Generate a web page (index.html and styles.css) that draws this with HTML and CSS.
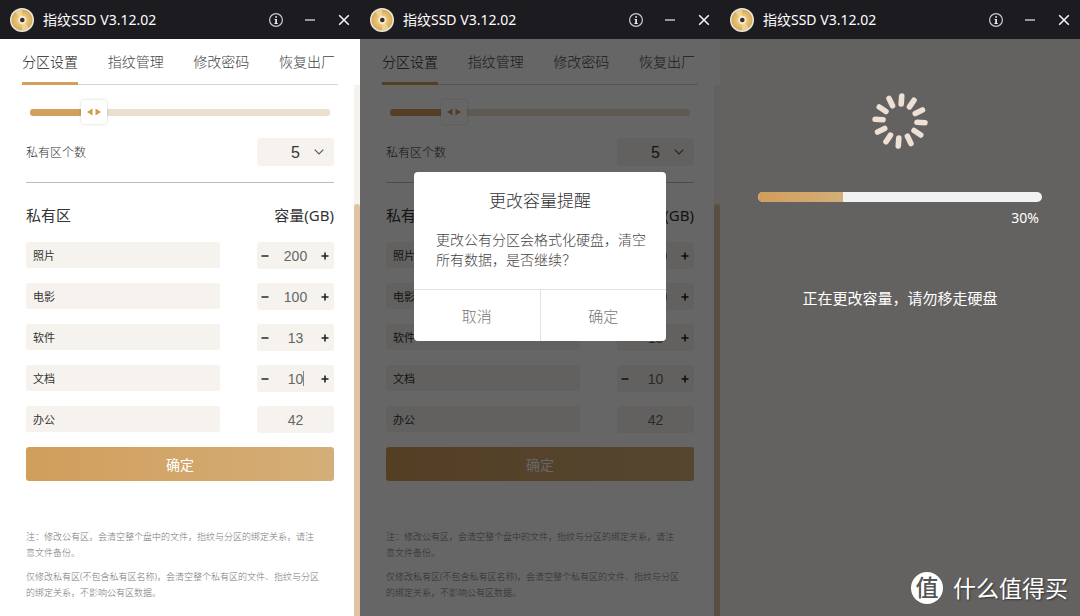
FILE: index.html
```html
<!DOCTYPE html>
<html lang="zh-CN">
<head>
<meta charset="utf-8">
<meta name="viewport" content="width=device-width, initial-scale=1">
<title>指纹SSD V3.12.02</title>
<link rel="stylesheet" href="styles.css">
</head>
<body>
<svg class="defs" aria-hidden="true">
  <defs>
    <radialGradient id="gold" cx=".5" cy=".5" r=".55"><stop offset="0" stop-color="#f6dc9c"/><stop offset=".6" stop-color="#e3bb6c"/><stop offset="1" stop-color="#d0a559"/></radialGradient>
    <symbol id="disc" viewBox="0 0 24 24"><circle cx="12" cy="12" r="12" fill="#efe9df"/><circle cx="12" cy="12" r="10.6" fill="url(#gold)"/><path d="M12 12 5 3.9A10.6 10.6 0 0 1 12 1.4zM12 12l7 8.1a10.6 10.6 0 0 1-7 2.5z" fill="#f7e2ae" opacity=".6"/><circle cx="12.3" cy="12" r="4.2" fill="#f6ead0"/><circle cx="12.3" cy="12" r="2.3" fill="#3a2f2a"/></symbol>
    <symbol id="info" viewBox="0 0 16 16"><circle cx="8" cy="8" r="6.4" fill="none" stroke="#c9c9cc" stroke-width="1.2"/><path d="M7.2 4.2h1.8v1.6H7.2zM6.6 7H9v4h.8v1H6.4v-1h.8V8h-.6z" fill="#e8e8ea"/></symbol>
    <symbol id="min" viewBox="0 0 16 16"><path d="M3 8h10" stroke="#dcdcde" stroke-width="1.3"/></symbol>
    <symbol id="close" viewBox="0 0 16 16"><path d="m3.2 3.2 9.6 9.6m0-9.6-9.6 9.6" stroke="#f2f2f4" stroke-width="1.6"/></symbol>
    <symbol id="minus" viewBox="0 0 8 8"><path d="M.5 4h7" stroke="#333" stroke-width="1.6"/></symbol>
    <symbol id="plus" viewBox="0 0 8 8"><path d="M.5 4h7M4 .5v7" stroke="#222" stroke-width="1.6"/></symbol>
    <symbol id="chev" viewBox="0 0 10 6"><path d="m.7.7 4.3 4.3L9.3.7" fill="none" stroke="#555" stroke-width="1.1"/></symbol>
  </defs>
</svg>
<main class="windows">

  <section class="window">
    <header class="titlebar">
      <svg class="logo"><use href="#disc"/></svg>
      <h1 class="title">指纹SSD V3.12.02</h1>
      <button class="win-btn" aria-label="关于"><svg><use href="#info"/></svg></button>
      <button class="win-btn" aria-label="最小化"><svg><use href="#min"/></svg></button>
      <button class="win-btn" aria-label="关闭"><svg><use href="#close"/></svg></button>
    </header>
    <nav class="tabs">
      <button class="tab active">分区设置</button><button class="tab">指纹管理</button><button class="tab">修改密码</button><button class="tab">恢复出厂</button>
    </nav>
    <div class="scroll-area">
      <form class="content">
        <input class="slider" type="range" min="0" max="1000" value="186" aria-label="公有区容量">
        <div class="count-row">
          <label class="count-label" for="count-a">私有区个数</label>
          <span class="count"><select id="count-a"><option>5</option></select><svg class="chev"><use href="#chev"/></svg></span>
        </div>
        <div class="list-head"><h2>私有区</h2><h2>容量(GB)</h2></div>
        <div class="rows">
          <div class="row"><input class="name" aria-label="名称" value="照片"><div class="stepper"><button type="button" aria-label="减少"><svg><use href="#minus"/></svg></button><input aria-label="照片容量" value="200"><button type="button" aria-label="增加"><svg><use href="#plus"/></svg></button></div></div>
          <div class="row"><input class="name" aria-label="名称" value="电影"><div class="stepper"><button type="button" aria-label="减少"><svg><use href="#minus"/></svg></button><input aria-label="电影容量" value="100"><button type="button" aria-label="增加"><svg><use href="#plus"/></svg></button></div></div>
          <div class="row"><input class="name" aria-label="名称" value="软件"><div class="stepper"><button type="button" aria-label="减少"><svg><use href="#minus"/></svg></button><input aria-label="软件容量" value="13"><button type="button" aria-label="增加"><svg><use href="#plus"/></svg></button></div></div>
          <div class="row"><input class="name" aria-label="名称" value="文档"><div class="stepper editing"><button type="button" aria-label="减少"><svg><use href="#minus"/></svg></button><input aria-label="文档容量" value="10"><button type="button" aria-label="增加"><svg><use href="#plus"/></svg></button></div></div>
          <div class="row"><input class="name" aria-label="名称" value="办公"><div class="stepper"><input aria-label="办公容量" value="42" readonly></div></div>
        </div>
        <button class="submit" type="button">确定</button>
        <div class="notes">
          <p>注：修改公有区，会清空整个盘中的文件，指纹与分区的绑定关系，请注<br>意文件备份。</p>
          <p>仅修改私有区(不包含私有区名称)，会清空整个私有区的文件、指纹与分区<br>的绑定关系，不影响公有区数据。</p>
        </div>
      </form>
      <div class="scrollbar"><div class="scroll-thumb"></div></div>
    </div>
  </section>

  <section class="window">
    <header class="titlebar">
      <svg class="logo"><use href="#disc"/></svg>
      <h1 class="title">指纹SSD V3.12.02</h1>
      <button class="win-btn" aria-label="关于"><svg><use href="#info"/></svg></button>
      <button class="win-btn" aria-label="最小化"><svg><use href="#min"/></svg></button>
      <button class="win-btn" aria-label="关闭"><svg><use href="#close"/></svg></button>
    </header>
    <nav class="tabs">
      <button class="tab active">分区设置</button><button class="tab">指纹管理</button><button class="tab">修改密码</button><button class="tab">恢复出厂</button>
    </nav>
    <div class="scroll-area">
      <form class="content">
        <input class="slider" type="range" min="0" max="1000" value="186" aria-label="公有区容量">
        <div class="count-row">
          <label class="count-label" for="count-b">私有区个数</label>
          <span class="count"><select id="count-b"><option>5</option></select><svg class="chev"><use href="#chev"/></svg></span>
        </div>
        <div class="list-head"><h2>私有区</h2><h2>容量(GB)</h2></div>
        <div class="rows">
          <div class="row"><input class="name" aria-label="名称" value="照片"><div class="stepper"><button type="button" aria-label="减少"><svg><use href="#minus"/></svg></button><input aria-label="照片容量" value="200"><button type="button" aria-label="增加"><svg><use href="#plus"/></svg></button></div></div>
          <div class="row"><input class="name" aria-label="名称" value="电影"><div class="stepper"><button type="button" aria-label="减少"><svg><use href="#minus"/></svg></button><input aria-label="电影容量" value="100"><button type="button" aria-label="增加"><svg><use href="#plus"/></svg></button></div></div>
          <div class="row"><input class="name" aria-label="名称" value="软件"><div class="stepper"><button type="button" aria-label="减少"><svg><use href="#minus"/></svg></button><input aria-label="软件容量" value="13"><button type="button" aria-label="增加"><svg><use href="#plus"/></svg></button></div></div>
          <div class="row"><input class="name" aria-label="名称" value="文档"><div class="stepper"><button type="button" aria-label="减少"><svg><use href="#minus"/></svg></button><input aria-label="文档容量" value="10"><button type="button" aria-label="增加"><svg><use href="#plus"/></svg></button></div></div>
          <div class="row"><input class="name" aria-label="名称" value="办公"><div class="stepper"><input aria-label="办公容量" value="42" readonly></div></div>
        </div>
        <button class="submit" type="button">确定</button>
        <div class="notes">
          <p>注：修改公有区，会清空整个盘中的文件，指纹与分区的绑定关系，请注<br>意文件备份。</p>
          <p>仅修改私有区(不包含私有区名称)，会清空整个私有区的文件、指纹与分区<br>的绑定关系，不影响公有区数据。</p>
        </div>
      </form>
      <div class="scrollbar"><div class="scroll-thumb"></div></div>
    </div>
    <div class="overlay">
      <div class="dialog" role="dialog" aria-labelledby="dialog-title">
        <h2 class="dialog-title" id="dialog-title">更改容量提醒</h2>
        <p class="dialog-text">更改公有分区会格式化硬盘，清空<br>所有数据，是否继续？</p>
        <div class="dialog-actions"><button>取消</button><button>确定</button></div>
      </div>
    </div>
  </section>

  <section class="window busy">
    <header class="titlebar">
      <svg class="logo"><use href="#disc"/></svg>
      <h1 class="title">指纹SSD V3.12.02</h1>
      <button class="win-btn" aria-label="关于"><svg><use href="#info"/></svg></button>
      <button class="win-btn" aria-label="最小化"><svg><use href="#min"/></svg></button>
      <button class="win-btn" aria-label="关闭"><svg><use href="#close"/></svg></button>
    </header>
    <div class="progress-view">
      <svg class="spinner" viewBox="-28 -28 56 56" aria-hidden="true">
        <g stroke="#ece1d4" stroke-width="5.6" stroke-linecap="round" transform="rotate(4)">
          <path id="ray" d="M0-25v8"/>
          <use href="#ray" transform="rotate(30)"/><use href="#ray" transform="rotate(60)"/><use href="#ray" transform="rotate(90)"/><use href="#ray" transform="rotate(120)"/><use href="#ray" transform="rotate(150)"/><use href="#ray" transform="rotate(180)"/><use href="#ray" transform="rotate(210)"/><use href="#ray" transform="rotate(240)"/><use href="#ray" transform="rotate(270)"/><use href="#ray" transform="rotate(300)"/><use href="#ray" transform="rotate(330)"/>
        </g>
      </svg>
      <progress class="progress" id="job" max="100" value="30"></progress>
      <label class="percent" for="job">30%</label>
      <p class="message">正在更改容量，请勿移走硬盘</p>
    </div>
    <footer class="brand"><span class="brand-mark">值</span><span>什么值得买</span></footer>
  </section>

</main>
</body>
</html>
```
FILE: styles.css
```css
* { box-sizing: border-box; }

body {
  margin: 0;
  font-family: "Noto Sans", "Noto Sans CJK SC", sans-serif;
  font-weight: 300;
  color: #333;
}

h1, h2, p { margin: 0; font-weight: inherit; }

button, input, select {
  margin: 0;
  padding: 0;
  border: 0;
  background: none;
  font: inherit;
  color: inherit;
  outline: 0;
}

.defs { position: absolute; width: 0; height: 0; }

.windows {
  display: grid;
  grid-template-columns: repeat(3, 1fr);
  min-height: 100vh;
}

.window {
  position: relative;
  display: flex;
  flex-direction: column;
  background: #fff;
}

/* Title bar */
.titlebar {
  display: flex;
  align-items: center;
  gap: 18px;
  height: 39px;
  padding: 0 8px 0 10px;
  background: #1c1b20;
  color: #fff;
}
.logo { width: 24px; height: 24px; margin-right: -9px; }
.title { flex: 1; font-size: 14px; line-height: 20px; font-weight: 400; white-space: nowrap; }
.win-btn { width: 16px; height: 16px; }
.win-btn svg { display: block; width: 16px; height: 16px; }

/* Tabs */
.tabs {
  display: flex;
  justify-content: space-between;
  height: 46px;
  margin: 0 22px;
  padding-right: 3px;
  box-shadow: inset 0 -1px #d4d4d4;
}
.tab {
  height: 46px;
  border-bottom: 3px solid transparent;
  font-size: 14px;
  color: #444;
  white-space: nowrap;
}
.tab.active { border-color: #d29f5c; color: #222; }

/* Settings */
.scroll-area { flex: 1; display: flex; }
.content {
  flex: 1;
  display: flex;
  flex-direction: column;
  padding: 14px 20px 16px 26px;
}
.scrollbar { width: 6px; padding-top: 119px; background: #f6f2ed; display: flex; }
.scroll-thumb { flex: 1; border-radius: 3px 3px 0 0; background: #dfc3a3; }

.slider {
  appearance: none;
  height: 26px;
  margin: 0 4px;
}
.slider::-webkit-slider-runnable-track {
  height: 7px;
  border-radius: 3px;
  background: linear-gradient(90deg, #d29f5c 20%, #ebdfd0 20%);
}
.slider::-webkit-slider-thumb {
  appearance: none;
  width: 26px;
  height: 24px;
  margin-top: -9px;
  border-radius: 3px;
  background: #fff url("data:image/svg+xml,%3Csvg xmlns='http://www.w3.org/2000/svg' width='14' height='8'%3E%3Cpath d='M5.5 .5v7L0 4zM8.5 .5v7L14 4z' fill='%23d29a50'/%3E%3C/svg%3E") center no-repeat;
  box-shadow: 0 0 3px rgba(0, 0, 0, .18);
}

.count-row {
  display: flex;
  align-items: center;
  justify-content: space-between;
  padding: 13px 0 16px;
  border-bottom: 1px solid #bcbcbc;
}
.count-label { font-size: 12px; color: #333; }
.count { position: relative; width: 25%; display: flex; }
.count select {
  appearance: none;
  width: 100%;
  height: 28px;
  padding-left: 34px;
  border-radius: 3px;
  background: #f6f3ef;
  font-family: "Liberation Sans", sans-serif;
  font-size: 16px;
}
.chev { position: absolute; right: 10px; top: 11px; width: 10px; height: 6px; pointer-events: none; }

.list-head {
  display: flex;
  justify-content: space-between;
  padding: 20px 0 15px;
  line-height: 24px;
}
.list-head h2 { font-size: 15px; font-weight: 400; }

.rows { display: grid; gap: 14px; }
.row { display: flex; justify-content: space-between; align-items: flex-start; }
.name {
  width: 63%;
  height: 26px;
  padding: 0 7px;
  border-radius: 3px;
  background: #f6f3ef;
  font-size: 11px;
  font-weight: 400;
}
.stepper {
  position: relative;
  display: flex;
  align-items: center;
  width: 25%;
  height: 27px;
  padding: 0 4px;
  border-radius: 3px;
  background: #f6f3ef;
}
.stepper button { width: 9px; height: 8px; flex: none; }
.stepper svg { display: block; width: 8px; height: 8px; }
.stepper input {
  flex: 1;
  min-width: 0;
  width: 100%;
  text-align: center;
  font-family: "Liberation Sans", sans-serif;
  font-size: 14px;
  color: #666;
}
.editing::after {
  content: "";
  position: absolute;
  left: 60%;
  top: 6px;
  width: 1px;
  height: 15px;
  background: #888;
}

.submit {
  height: 34px;
  margin-top: 14px;
  border-radius: 3px;
  background: linear-gradient(90deg, #d19e5c, #d4ae78);
  color: #fff;
  font-size: 14px;
  font-weight: 400;
}
.notes {
  display: grid;
  gap: 8px;
  padding-top: 48px;
  font-size: 9px;
  line-height: 16px;
  color: #777;
  white-space: nowrap;
}

/* Confirmation */
.overlay {
  position: absolute;
  inset: 39px 0 0;
  display: flex;
  align-items: flex-start;
  justify-content: center;
  padding-top: 133px;
  background: rgba(0, 0, 0, .6);
}
.dialog { width: 70%; border-radius: 4px; background: #fff; overflow: hidden; }
.dialog-title { padding-top: 17px; text-align: center; font-size: 17px; line-height: 24px; }
.dialog-text {
  padding: 17px 22px 19px;
  font-size: 14px;
  line-height: 20px;
  color: #444;
  white-space: nowrap;
}
.dialog-actions { display: flex; border-top: 1px solid #e2e2e2; }
.dialog-actions button { flex: 1; height: 51px; font-size: 15px; color: #777; }
.dialog-actions button + button { border-left: 1px solid #e2e2e2; }

/* Progress */
.busy { background: #646260; color: #fff; }
.progress-view {
  flex: 1;
  display: flex;
  flex-direction: column;
  align-items: center;
  padding: 54px 38px 0;
}
.spinner { width: 56px; height: 56px; }
.progress {
  appearance: none;
  width: 100%;
  height: 10px;
  margin-top: 43px;
  border: 0;
  border-radius: 5px;
  overflow: hidden;
  background: #f2f2f2;
}
.progress::-webkit-progress-bar { background: #f2f2f2; }
.progress::-webkit-progress-value { background: linear-gradient(90deg, #d19e5c, #d4ae78); }
.percent { align-self: flex-end; padding: 6px 3px 0 0; font-size: 14px; line-height: 20px; font-weight: 400; }
.message { padding-top: 58px; font-size: 15px; line-height: 24px; font-weight: 400; }

.brand {
  display: flex;
  align-items: center;
  justify-content: flex-end;
  gap: 10px;
  padding: 0 12px 12px 0;
  font-size: 23px;
  line-height: 34px;
  font-weight: 400;
  text-shadow: 1px 1px 2px rgba(0, 0, 0, .5);
}
.brand-mark {
  width: 32px;
  height: 32px;
  border-radius: 50%;
  background: #fff;
  color: #555;
  text-align: center;
  line-height: 30px;
  font-weight: 500;
  text-shadow: none;
}
```
